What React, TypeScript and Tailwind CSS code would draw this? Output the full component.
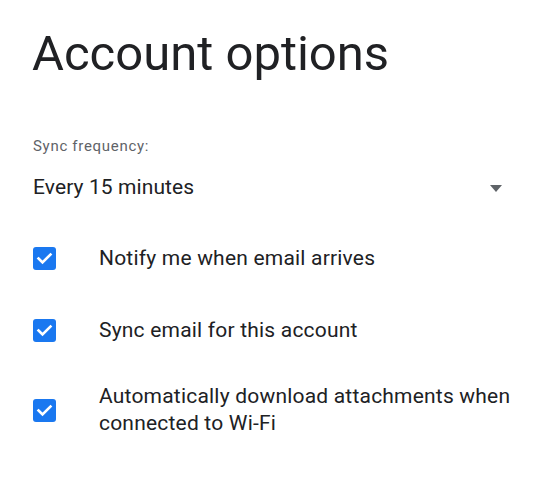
import React from "react";

const Check = () => (
  <div className="w-[23px] h-[23px] rounded-[3px] bg-[#1a78f0] flex items-center justify-center shrink-0">
    <svg width="23" height="23" viewBox="0 0 23 23" fill="none">
      <path d="M5.5 11.5 L9.5 15.5 L17.5 7.5" stroke="white" strokeWidth="2.6" strokeLinecap="square" />
    </svg>
  </div>
);

const Row = ({ children, h }: { children: React.ReactNode; h: string }) => (
  <div className={`flex items-center ${h}`}>
    <div className="w-[99px] shrink-0 pl-[33px] flex items-center">
      <Check />
    </div>
    <div className="text-[21px] leading-[27px] tracking-[0.2px] text-[#202124]">{children}</div>
  </div>
);

export default function App() {
  return (
    <div className="w-[549px] h-[497px] bg-white" style={{ fontFamily: "Roboto, 'Liberation Sans', sans-serif" }}>
      <h1 className="pl-[32px] pt-[24px] text-[49px] leading-[60px] text-[#202124] font-normal">Account options</h1>
      <div className="pl-[33px] pt-[52px] text-[15px] leading-[20px] tracking-[0.7px] text-[#5f6368]">Sync frequency:</div>
      <div className="flex items-center pl-[33px] pr-[47px] mt-[20px] h-[24px]">
        <div className="text-[21px] tracking-[0.1px] text-[#202124] flex-1">Every 15 minutes</div>
        <svg width="12" height="7" viewBox="0 0 12 7">
          <path d="M0 0 L12 0 L6 7 Z" fill="#5f6368" />
        </svg>
      </div>
      <div className="mt-[34px]">
        <Row h="h-[48px]">Notify me when email arrives</Row>
        <div className="h-[24px]" />
        <Row h="h-[48px]">Sync email for this account</Row>
        <div className="h-[26px]" />
        <Row h="h-[60px]">
          Automatically download attachments when
          <br />
          connected to Wi-Fi
        </Row>
      </div>
    </div>
  );
}
